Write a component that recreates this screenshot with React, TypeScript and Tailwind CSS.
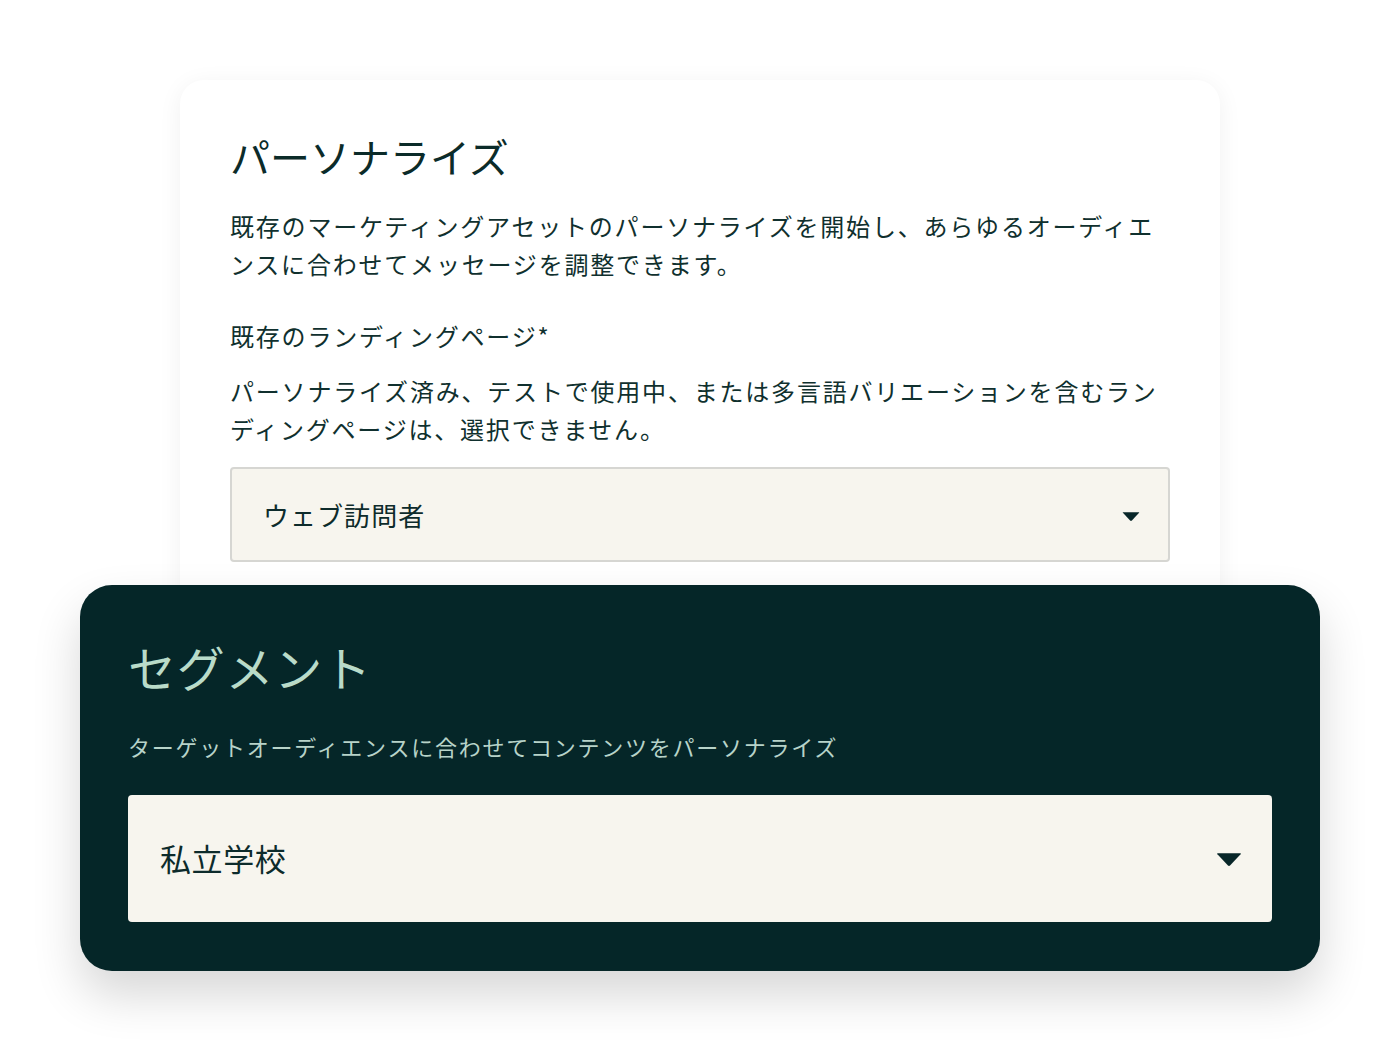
import React from 'react';

const FONT = { fontFamily: '"Noto Sans CJK JP", "Noto Sans", sans-serif' };

// Small filled caret used on both select boxes
const Caret: React.FC<{ className?: string }> = ({ className }) => (
  <svg viewBox="0 0 24 14" className={className} fill="currentColor">
    <path d="M1.5 1.2 H22.5 Q23.6 1.2 22.8 2.1 L13.2 12.4 Q12 13.6 10.8 12.4 L1.2 2.1 Q0.4 1.2 1.5 1.2 Z" />
  </svg>
);

export default function App() {
  return (
    <div className="min-h-[1050px] w-[1400px] bg-white text-[#0d2b2b]" style={FONT}>
      <div className="flex flex-col items-center pt-[80px]">
        {/* Personalize card */}
        <div className="w-[1040px] rounded-[24px] bg-white px-[50px] pt-[48px] pb-[72px] shadow-[0_4px_24px_rgba(0,0,0,0.06)]">
          <h2 className="text-[40px] leading-[56px] font-normal text-[#0b2b29]">パーソナライズ</h2>
          <p className="mt-[23px] text-[24px] leading-[38px] tracking-[0.075em] text-[#10302e]">
            既存のマーケティングアセットのパーソナライズを開始し、あらゆるオーディエンスに合わせてメッセージを調整できます。
          </p>
          <p className="mt-[33px] text-[24px] leading-[40px] tracking-[0.075em] font-normal text-[#10302e]">
            既存のランディングページ*
          </p>
          <p className="mt-[16px] text-[24px] leading-[38px] tracking-[0.075em] text-[#10302e]">
            パーソナライズ済み、テストで使用中、または多言語バリエーションを含むランディングページは、選択できません。
          </p>
          <div className="mt-[19px] flex h-[95px] items-center justify-between rounded-[4px] border-2 border-[#d6d6d2] bg-[#f7f5ee] pl-[31px] pr-[28px]">
            <span className="text-[26px] tracking-[0.04em] text-[#0d2b2b]">ウェブ訪問者</span>
            <Caret className="mt-[4px] h-[11px] w-[18px] text-[#082628]" />
          </div>
        </div>

        {/* Segment card, overlapping the bottom of the card above */}
        <div className="relative -mt-[49px] w-[1240px] rounded-[32px] bg-[#052628] px-[48px] pt-[49px] pb-[49px] shadow-[0_24px_48px_rgba(0,0,0,0.16)]">
          <h2 className="text-[48px] leading-[64px] tracking-[0.015em] text-[#b9dbc9]">セグメント</h2>
          <p className="mt-[32px] text-[22px] leading-[32px] tracking-[0.08em] text-[#b7d3c9]">
            ターゲットオーディエンスに合わせてコンテンツをパーソナライズ
          </p>
          <div className="mt-[33px] flex h-[127px] items-center justify-between rounded-[4px] bg-[#f7f5ee] pl-[32px] pr-[30px]">
            <span className="text-[31px] tracking-[0.02em] text-[#0d2b2b]">私立学校</span>
            <Caret className="mt-[2px] h-[15px] w-[26px] text-[#082628]" />
          </div>
        </div>
      </div>
    </div>
  );
}
